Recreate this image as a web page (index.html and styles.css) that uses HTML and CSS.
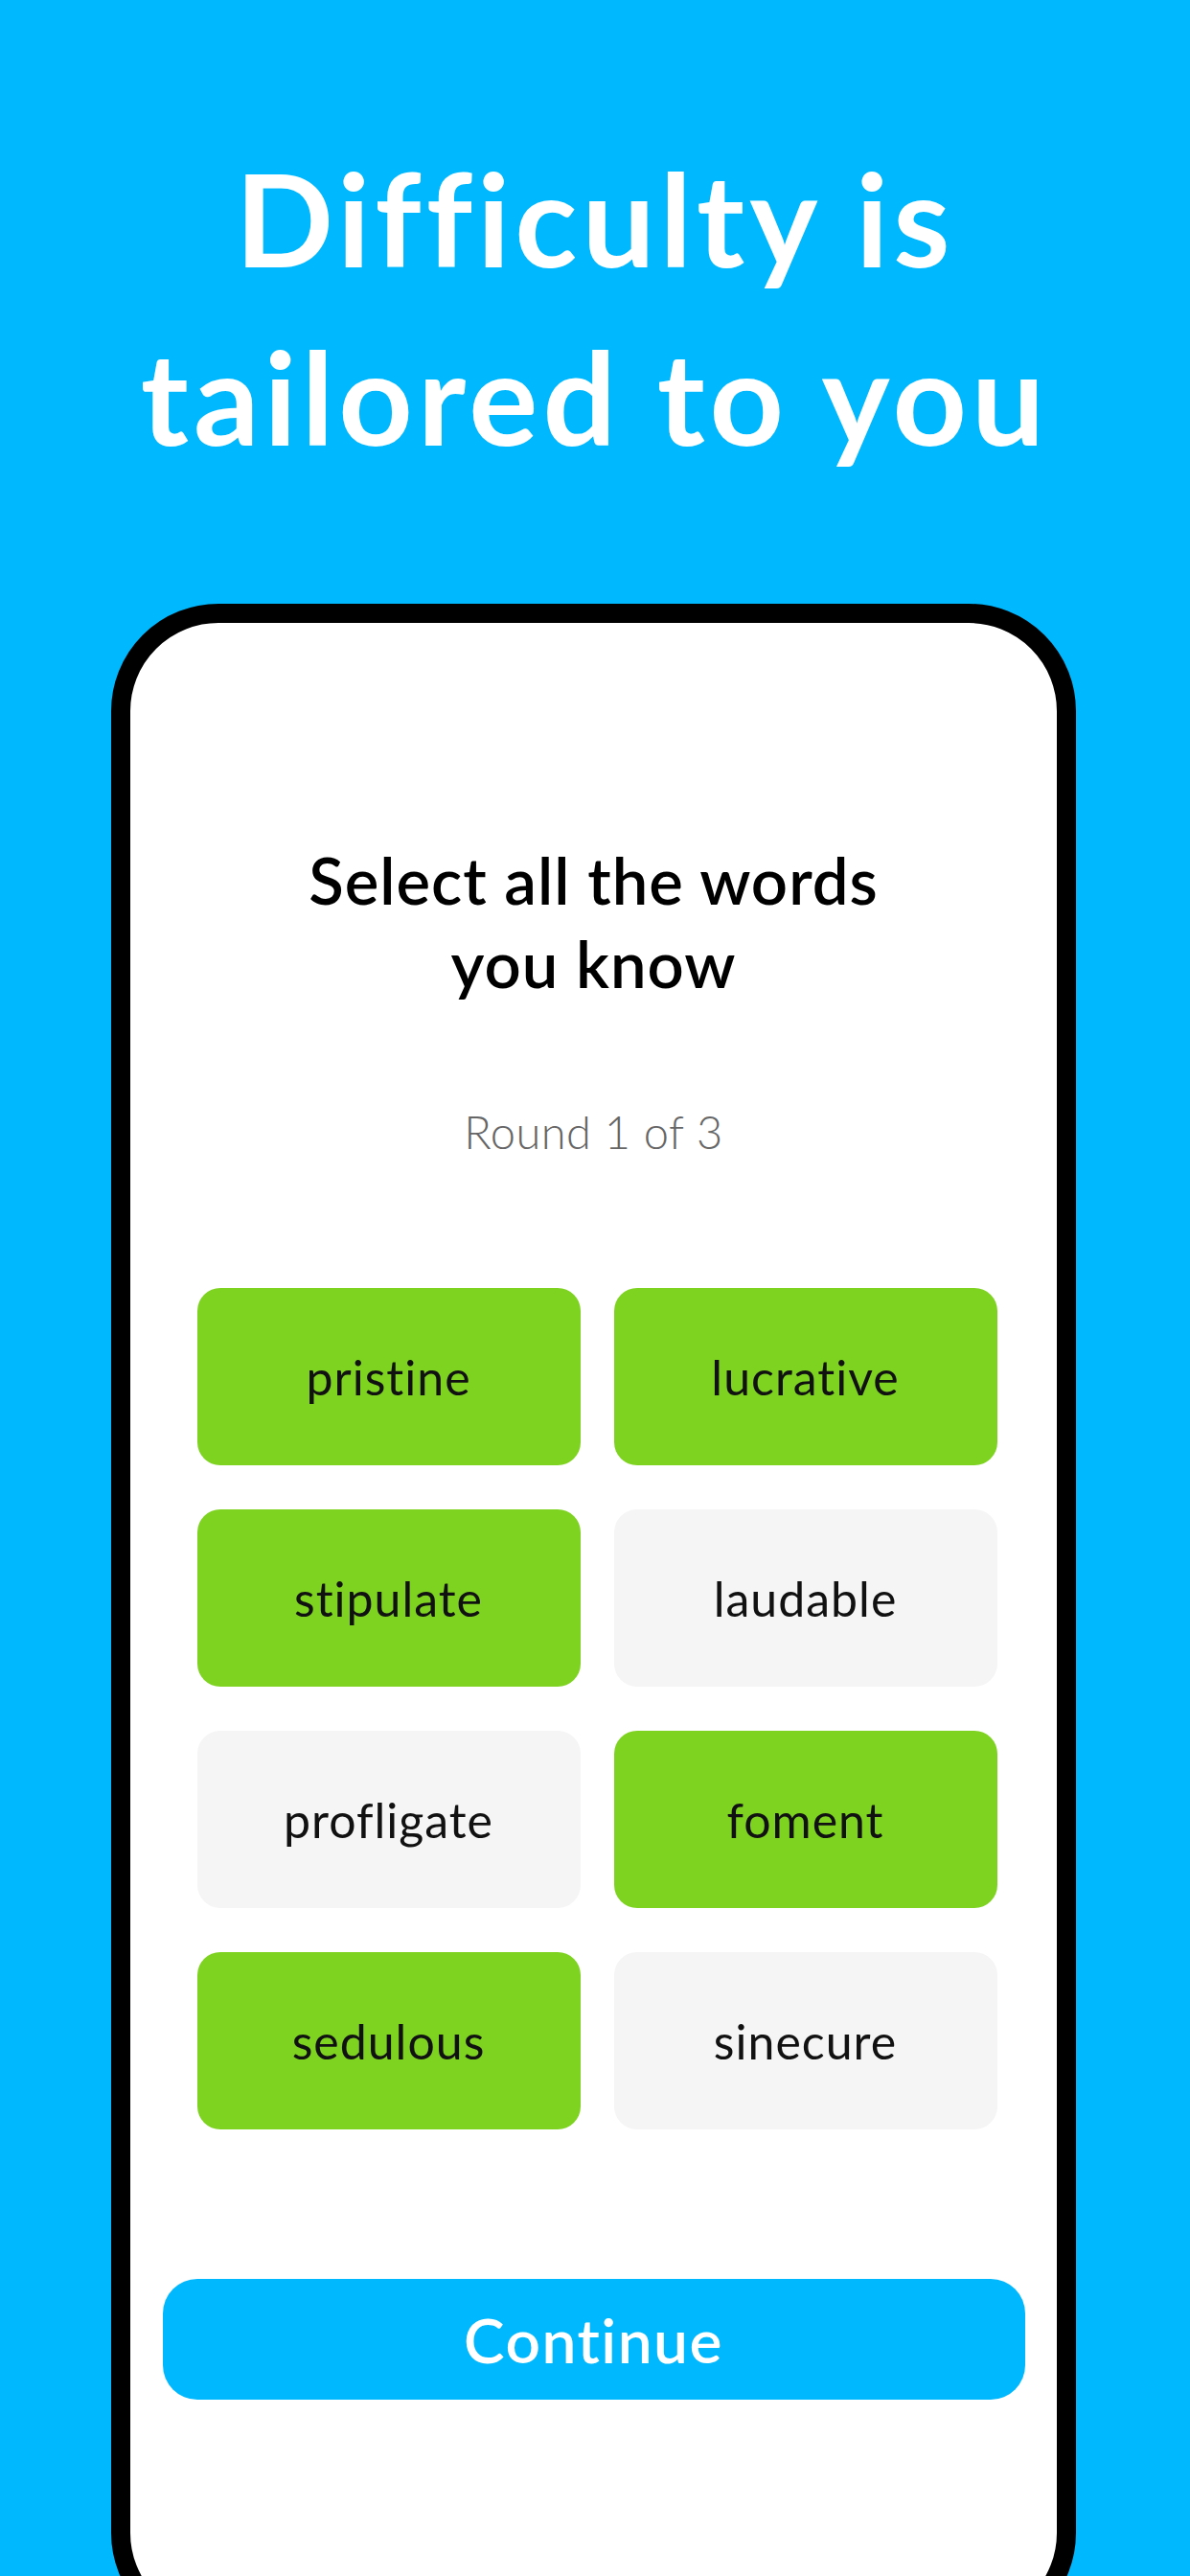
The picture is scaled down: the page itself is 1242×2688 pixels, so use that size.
FILE: index.html
```html
<!DOCTYPE html>
<html lang="en">
<head>
<meta charset="utf-8">
<title>Difficulty is tailored to you</title>
<link rel="stylesheet" href="styles.css">
</head>
<body>
<main class="page">
  <h1 class="headline">Difficulty is<br>tailored to you</h1>
  <section class="phone">
    <div class="screen">
      <h2 class="prompt">Select all the words<br>you know</h2>
      <p class="round">Round 1 of 3</p>
      <div class="words">
        <div class="word selected">pristine</div>
        <div class="word selected">lucrative</div>
        <div class="word selected">stipulate</div>
        <div class="word">laudable</div>
        <div class="word">profligate</div>
        <div class="word selected">foment</div>
        <div class="word selected">sedulous</div>
        <div class="word">sinecure</div>
      </div>
      <button class="continue" type="button">Continue</button>
    </div>
  </section>
</main>
</body>
</html>
```

FILE: styles.css
```css
html, body {
  margin: 0;
  padding: 0;
}

body {
  width: 1242px;
  height: 2688px;
  overflow: hidden;
  background: #00b8fe;
  font-family: "Lato", "Noto Sans", sans-serif;
  font-variant-ligatures: none;
}

.page {
  display: flex;
  flex-direction: column;
  align-items: center;
}

.headline {
  margin: 134px 0 0;
  font-size: 135px;
  line-height: 186px;
  font-weight: 700;
  color: #ffffff;
  text-align: center;
  letter-spacing: 5px;
}

.phone {
  box-sizing: border-box;
  width: 1007px;
  height: 2125px;
  margin-top: 124px;
  margin-right: 3px;
  border: 20px solid #000000;
  border-radius: 112px;
  background: #ffffff;
  flex-shrink: 0;
}

.screen {
  display: flex;
  flex-direction: column;
  align-items: center;
  padding-top: 225px;
}

.prompt {
  margin: 0;
  font-size: 67px;
  line-height: 87px;
  font-weight: 600;
  color: #000000;
  text-align: center;
  letter-spacing: 1px;
}

.round {
  margin: 102px 0 0;
  font-size: 47px;
  line-height: 60px;
  font-weight: 300;
  color: #666666;
  letter-spacing: 0.5px;
}

.words {
  display: grid;
  grid-template-columns: 400px 400px;
  grid-auto-rows: 185px;
  column-gap: 35px;
  row-gap: 46px;
  margin-top: 133px;
  padding-left: 7px;
}

.word {
  display: flex;
  align-items: center;
  justify-content: center;
  border-radius: 24px;
  background: #f5f5f5;
  font-size: 50px;
  font-weight: 400;
  color: #111111;
  letter-spacing: 1px;
}

.word.selected {
  background: #7ed321;
}

.continue {
  box-sizing: border-box;
  width: 900px;
  height: 126px;
  margin-top: 156px;
  border: none;
  border-radius: 36px;
  background: #00b8fe;
  color: #ffffff;
  font-family: "Lato", "Noto Sans", sans-serif;
  font-size: 64px;
  font-weight: 600;
  letter-spacing: 1.5px;
  padding: 0;
}
```
